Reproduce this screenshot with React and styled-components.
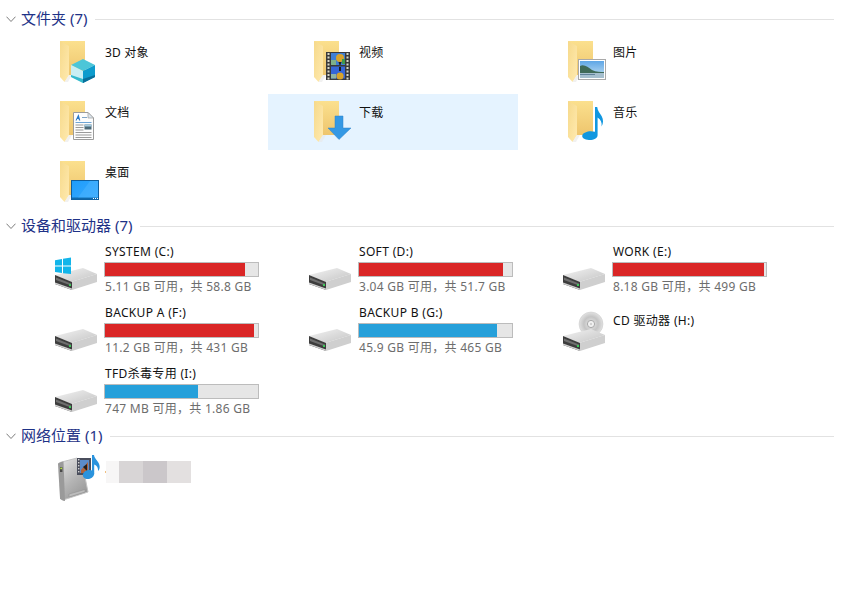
import React, { useId } from "react";
import styled, { createGlobalStyle } from "styled-components";

const Global = createGlobalStyle`
  html, body { margin: 0; padding: 0; background: #fff; }
  body { font-family: "Noto Sans", "Noto Sans CJK SC", sans-serif; font-size: 12px; overflow: hidden; }
`;

const Page = styled.div`
  width: 841px;
  height: 609px;
  padding-top: 9px;
  box-sizing: border-box;
  background: #fff;
`;

const Section = styled.section`
  margin-bottom: ${(p) => p.$after}px;
`;

const Header = styled.div`
  display: flex;
  align-items: center;
  height: 20px;
  padding: 0 7px 0 6px;
  margin-bottom: ${(p) => p.$below}px;
`;

const HeaderTitle = styled.span`
  margin-left: 5px;
  padding-bottom: 2px;
  font-size: 15px;
  line-height: 18px;
  color: #1e3287;
  white-space: nowrap;
`;

const HeaderRule = styled.span`
  flex: 1;
  height: 1px;
  margin-left: 8px;
  background: #e2e2e2;
`;

const Chevron = styled.svg`
  width: 10px;
  height: 7px;
  flex: none;
`;

const Grid = styled.div`
  display: grid;
  grid-template-columns: repeat(3, 250px);
  column-gap: 4px;
  row-gap: 4px;
  margin-left: 14px;
`;

const FolderCell = styled.div`
  display: flex;
  height: 56px;
  background: ${(p) => (p.$active ? "#e5f3ff" : "transparent")};
`;

const IconSlot = styled.div`
  flex: none;
  width: 48px;
  margin-left: 42px;
  padding-top: 4px;
  height: 48px;
`;

const Label = styled.span`
  margin-left: 1px;
  padding-top: 11px;
  line-height: 16px;
  font-size: 12px;
  letter-spacing: 0.2px;
  color: #111;
  white-space: nowrap;
`;

const DriveCell = styled.div`
  display: flex;
  height: 57px;
`;

const DriveIconSlot = styled.div`
  flex: none;
  width: 48px;
  height: 44px;
  margin-left: 41px;
  margin-right: 1px;
  padding-top: 13px;
`;

const DriveInfo = styled.div`
  width: 155px;
  display: flex;
  flex-direction: column;
  padding-top: ${(p) => (p.$solo ? 8 : 0)}px;
`;

const DriveName = styled.div`
  height: 16px;
  line-height: 16px;
  padding-left: 1px;
  font-size: 12px;
  letter-spacing: 0.33px;
  color: #111;
  white-space: nowrap;
`;

const Track = styled.div`
  height: 13px;
  margin-top: 2px;
  border: 1px solid #bcbcbc;
  background: #e6e6e6;
`;

const Fill = styled.div`
  height: 100%;
  background: ${(p) => p.$color};
`;

const DriveSpace = styled.div`
  height: 16px;
  line-height: 16px;
  margin-top: 2px;
  padding-left: 1px;
  font-size: 12px;
  letter-spacing: 0.27px;
  color: #6d6d6d;
  white-space: nowrap;
`;

const NetworkRow = styled.div`
  display: flex;
  height: 56px;
  margin-left: 14px;
`;

const NetworkIconSlot = styled.div`
  flex: none;
  width: 48px;
  height: 50px;
  margin-left: 41px;
`;

const Redacted = styled.div`
  display: flex;
  align-items: center;
  height: 22px;
  margin: 9px 0 0 2px;
`;

const Dot = styled.span`
  width: 1px;
  height: 2px;
  background: #f0c080;
`;

const Smudge = styled.span`
  height: 22px;
  width: ${(p) => p.$w}px;
  background: ${(p) => p.$c};
`;

const Icon = styled.svg`
  display: block;
  width: 48px;
  height: 48px;
  overflow: visible;
`;

const TallIcon = styled(Icon)`
  height: 50px;
`;

function FolderBase() {
  const id = useId();
  return (
    <>
      <defs>
        <linearGradient id={id + "b"} x1="0" y1="0" x2="0" y2="1">
          <stop offset="0" stopColor="#fbe08e" />
          <stop offset="1" stopColor="#eec56d" />
        </linearGradient>
        <linearGradient id={id + "f"} x1="0" y1="0" x2="1" y2="1">
          <stop offset="0" stopColor="#f6d98a" />
          <stop offset="1" stopColor="#ffeab0" />
        </linearGradient>
      </defs>
      <path d="M4 3H29V37H13Z" fill={`url(#${id}b)`} />
      <path d="M4 3L13 8V37L8.5 44L4 39Z" fill={`url(#${id}f)`} />
      <path d="M8.5 44L13 37H16L12 44Z" fill="#e8e8e8" opacity=".6" />
    </>
  );
}

const Cube = () => (
  <g>
    <path d="M27 21L39 27L27 33L15 27Z" fill="#4cc6d8" />
    <path d="M15 27L27 33V45L15 39Z" fill="#c9eff4" />
    <path d="M27 33L39 27V39L27 45Z" fill="#0d9ccd" />
    <path d="M15 37L27 41V45L15 39Z" fill="#35bacd" />
    <path d="M27 41L39 37V39L27 45Z" fill="#0a6f9a" />
  </g>
);

const Film = () => (
  <g>
    <rect x="16" y="14" width="24" height="28" fill="#3a3a3a" />
    {[15.5, 19, 22.5, 26, 29.5, 33, 36.5, 40].map((y) => (
      <React.Fragment key={y}>
        <rect x="17.5" y={y - 0.5} width="2" height="2" fill="#d8d8c8" />
        <rect x="36.5" y={y - 0.5} width="2" height="2" fill="#d8d8c8" />
      </React.Fragment>
    ))}
    <rect x="21" y="15" width="14" height="12" fill="#3f7fd4" />
    <rect x="21" y="28.5" width="14" height="12" fill="#3566d8" />
    <circle cx="30" cy="20" r="4" fill="#d9a32a" />
    <rect x="21" y="22" width="5" height="5" fill="#7fb08a" />
    <rect x="32" y="21" width="3" height="5" fill="#3e9a4d" />
    <path d="M28.5 24h3l-1 3h-1z" fill="#1d1d1d" />
    <circle cx="30" cy="38" r="3.6" fill="#d9a32a" />
    <rect x="21" y="36" width="5" height="4.5" fill="#8fb4a4" />
    <path d="M29 29h2v4h-2z" fill="#1d1d1d" />
  </g>
);

const DownArrow = () => (
  <path d="M25 18H33V30H41L29 41.5L18 30H25Z" fill="#3498e4" stroke="#2f83c9" strokeWidth=".5" />
);

const Picture = () => {
  const id = useId();
  return (
    <g>
      <defs>
        <linearGradient id={id} x1="0" y1="0" x2="0" y2="1">
          <stop offset="0" stopColor="#5ea6e6" />
          <stop offset="1" stopColor="#c7e2f2" />
        </linearGradient>
      </defs>
      <rect x="14.5" y="21.5" width="27" height="20" fill="#fff" stroke="#a9a9a9" />
      <rect x="16" y="23" width="24" height="17" fill={`url(#${id})`} />
      <path d="M16 28C20 26 24 29 28 32C32 34 37 34 40 34V36H16Z" fill="#3f6a58" />
      <rect x="16" y="35" width="24" height="5" fill="#a5bfce" />
      <rect x="16" y="36" width="15" height="1" fill="#5f8199" />
    </g>
  );
};

const Note = () => (
  <path
    d="M31 9H33.2C33.6 13 36 15 37.6 18C39.6 21.6 39.4 25.5 37.6 28.5C38 24.5 36.8 21.6 33.6 19.6V37C33.6 40.4 29.5 42.2 25 42C20.6 41.8 17.4 40 18.4 37C19.4 34.2 25.6 32 31 33.8Z"
    fill="#1197e0"
  />
);

const DocPage = () => (
  <g>
    <path d="M17.5 14.5H32L37.5 20V41.5H17.5Z" fill="#fdfdfd" stroke="#9c9c9c" />
    <path d="M32 14.5V20H37.5Z" fill="#dce6ee" stroke="#9c9c9c" strokeWidth=".7" />
    <path d="M19.5 22.5L22.5 16L24.3 22.5H23L22.6 21H21.2L20.7 22.5Z" fill="#2878c8" />
    <rect x="26" y="19" width="5" height="1" fill="#7fa5c8" />
    <rect x="19.5" y="24" width="16" height="1" fill="#6fa5d6" />
    <rect x="19.5" y="26.5" width="8" height="1" fill="#9a9a9a" />
    <rect x="28.5" y="26.5" width="7" height="5" fill="#4d6a78" />
    <rect x="28.5" y="26.5" width="7" height="2" fill="#a6cbe0" />
    <rect x="19.5" y="29" width="8" height="1" fill="#9a9a9a" />
    <rect x="19.5" y="31.5" width="8" height="1" fill="#9a9a9a" />
    <rect x="19.5" y="34" width="16" height="1" fill="#9a9a9a" />
    <rect x="19.5" y="36.5" width="16" height="1" fill="#9a9a9a" />
    <rect x="19.5" y="39" width="16" height="1" fill="#9a9a9a" />
  </g>
);

const Screen = () => {
  const id = useId();
  return (
    <g>
      <defs>
        <linearGradient id={id} x1="0" y1="0" x2="1" y2="1">
          <stop offset="0" stopColor="#1e9cfa" />
          <stop offset="1" stopColor="#38aaff" />
        </linearGradient>
      </defs>
      <rect x="15.5" y="22.5" width="27" height="19" fill={`url(#${id})`} stroke="#0f5d9c" />
      <rect x="16" y="39.5" width="26" height="2" fill="#0f6aae" />
      <path d="M22 39.5L34 23H42V39.5Z" fill="#5bbcff" opacity=".35" />
      <rect x="37" y="40" width="1" height="1" fill="#fff" />
      <rect x="39" y="40" width="1" height="1" fill="#fff" />
      <rect x="41" y="40" width="1" height="1" fill="#fff" />
    </g>
  );
};

const FOLDERS = [
  { name: "3D 对象", art: <Cube /> },
  { name: "视频", art: <Film /> },
  { name: "图片", art: <Picture /> },
  { name: "文档", art: <DocPage /> },
  { name: "下载", art: <DownArrow />, active: true },
  { name: "音乐", art: <Note /> },
  { name: "桌面", art: <Screen /> },
];

const DRIVES = [
  { name: "SYSTEM (C:)", space: "5.11 GB 可用，共 58.8 GB", pct: 91.5, color: "#da2626", win: true },
  { name: "SOFT (D:)", space: "3.04 GB 可用，共 51.7 GB", pct: 94, color: "#da2626" },
  { name: "WORK (E:)", space: "8.18 GB 可用，共 499 GB", pct: 98.4, color: "#da2626" },
  { name: "BACKUP A (F:)", space: "11.2 GB 可用，共 431 GB", pct: 97.4, color: "#da2626" },
  { name: "BACKUP B (G:)", space: "45.9 GB 可用，共 465 GB", pct: 90, color: "#26a0da" },
  { name: "CD 驱动器 (H:)", cd: true },
  { name: "TFD杀毒专用 (I:)", space: "747 MB 可用，共 1.86 GB", pct: 60.5, color: "#26a0da" },
];

function HardDisk() {
  const id = useId();
  return (
    <g transform="translate(0 10)">
      <defs>
        <linearGradient id={id} x1="0" y1="0" x2="1" y2="1">
          <stop offset="0" stopColor="#f3f3f3" />
          <stop offset="1" stopColor="#c4c4c4" />
        </linearGradient>
      </defs>
      <path d="M0 8L28 1L42 7L16 15Z" fill={`url(#${id})`} />
      <path d="M16 15L42 7V15L17 23Z" fill="#cfcfcf" />
      <path d="M0 8L17 15V23L0 17Z" fill="#3d3d3d" />
      <path d="M1 10.5L16 16.5V18.5L1 13Z" fill="#6f6f6f" />
      <path d="M0 15.5L17 21.5V23L0 17Z" fill="#d2d2d2" />
      <rect x="14" y="17" width="2" height="2" fill="#3ec95a" />
    </g>
  );
}

const WindowsLogo = () => (
  <g fill="#12b5ea">
    <path d="M0 3.2L7 2V8.6H0Z" />
    <path d="M8 1.8L16 0.5V8.6H8Z" />
    <path d="M0 9.6H7V16L0 15Z" />
    <path d="M8 9.6H16V17L8 16.2Z" />
  </g>
);

function Disc() {
  const id = useId();
  return (
    <g>
      <defs>
        <radialGradient id={id}>
          <stop offset="0" stopColor="#ececec" />
          <stop offset=".6" stopColor="#c4c4c4" />
          <stop offset="1" stopColor="#e2e2e2" />
        </radialGradient>
      </defs>
      <circle cx="28" cy="6" r="12" fill={`url(#${id})`} stroke="#c8c8c8" strokeWidth=".5" />
      <circle cx="28" cy="6" r="3.6" fill="#f2f2f2" stroke="#a8a8a8" />
      <circle cx="28" cy="6" r="1.2" fill="#d0d0d0" />
    </g>
  );
}

const DriveIcon = ({ win, cd }) => (
  <Icon viewBox="0 0 48 48">
    {cd && <Disc />}
    <HardDisk />
    {win && <WindowsLogo />}
  </Icon>
);

function MediaServer() {
  const id = useId();
  return (
    <TallIcon viewBox="0 0 48 50">
      <defs>
        <linearGradient id={id} x1="0" y1="0" x2="0.6" y2="1">
          <stop offset="0" stopColor="#e6e6e6" />
          <stop offset="0.6" stopColor="#b4b4b4" />
          <stop offset="1" stopColor="#9a9a9a" />
        </linearGradient>
      </defs>
      <path d="M5 10.5L22 6L29 20L33 40L8 48Z" fill={`url(#${id})`} stroke="#c4c4c4" strokeWidth="1" strokeLinejoin="round" />
      <path d="M3 12C3 11 4 10.5 8.5 9.5L10 49C8 49 6 48 5 46.5Z" fill="#9a9a9a" />
      <rect x="5" y="15" width="2.4" height="5" fill="#4a4a4a" />
      <rect x="5.3" y="15.6" width="1.8" height="1.6" fill="#b7e34a" />
      <path d="M14 45L30 40V37.5L14 42Z" fill="#bcbcbc" stroke="#8c8c8c" strokeWidth=".5" />
      <rect x="22" y="6" width="14" height="17" fill="#4a4e5c" />
      {[7, 10, 13, 16, 19].map((y) => (
        <rect key={y} x="23" y={y} width="1.4" height="1.4" fill="#d4d4d4" />
      ))}
      <rect x="25" y="8" width="9" height="13" fill="#5a8bc9" />
      <path d="M26 18L33 10V21H26Z" fill="#b0633a" />
      <path d="M28 15L32 12V19Z" fill="#1f1f1f" />
      <path d="M37 3H39C39.4 7 44 9 44.6 14C44.9 16.6 44 18.2 43 19C43.4 16 42 13.4 39.2 12.4V22H37Z" fill="#2a93dd" />
      <ellipse cx="33.5" cy="22.5" rx="5.8" ry="4.4" transform="rotate(-18 33.5 22.5)" fill="#2a93dd" />
    </TallIcon>
  );
}

const ChevronIcon = () => (
  <Chevron viewBox="0 0 10 7">
    <path d="M0.5 0.7L5 5.5L9.5 0.7" fill="none" stroke="#7c7c7c" strokeWidth="1" />
  </Chevron>
);

const SectionHeader = ({ title, below }) => (
  <Header $below={below}>
    <ChevronIcon />
    <HeaderTitle>{title}</HeaderTitle>
    <HeaderRule />
  </Header>
);

export default function App() {
  return (
    <Page>
      <Global />
      <Section $after={6}>
        <SectionHeader title="文件夹 (7)" below={5} />
        <Grid>
          {FOLDERS.map((f) => (
            <FolderCell key={f.name} $active={f.active}>
              <IconSlot>
                <Icon viewBox="0 0 48 48">
                  <FolderBase />
                  {f.art}
                </Icon>
              </IconSlot>
              <Label>{f.name}</Label>
            </FolderCell>
          ))}
        </Grid>
      </Section>
      <Section $after={3}>
        <SectionHeader title="设备和驱动器 (7)" below={8} />
        <Grid>
          {DRIVES.map((d) => (
            <DriveCell key={d.name}>
              <DriveIconSlot>
                <DriveIcon win={d.win} cd={d.cd} />
              </DriveIconSlot>
              <DriveInfo $solo={d.cd}>
                <DriveName>{d.name}</DriveName>
                {!d.cd && (
                  <>
                    <Track>
                      <Fill $color={d.color} style={{ width: `${d.pct}%` }} />
                    </Track>
                    <DriveSpace>{d.space}</DriveSpace>
                  </>
                )}
              </DriveInfo>
            </DriveCell>
          ))}
        </Grid>
      </Section>
      <Section $after={0}>
        <SectionHeader title="网络位置 (1)" below={6} />
        <NetworkRow>
          <NetworkIconSlot>
            <MediaServer />
          </NetworkIconSlot>
          <Redacted>
            <Dot />
            <Smudge $w={13} $c="#f7f6f6" />
            <Smudge $w={24} $c="#d8d5d6" />
            <Smudge $w={24} $c="#cbc7ca" />
            <Smudge $w={24} $c="#e3e0e0" />
          </Redacted>
        </NetworkRow>
      </Section>
    </Page>
  );
}
